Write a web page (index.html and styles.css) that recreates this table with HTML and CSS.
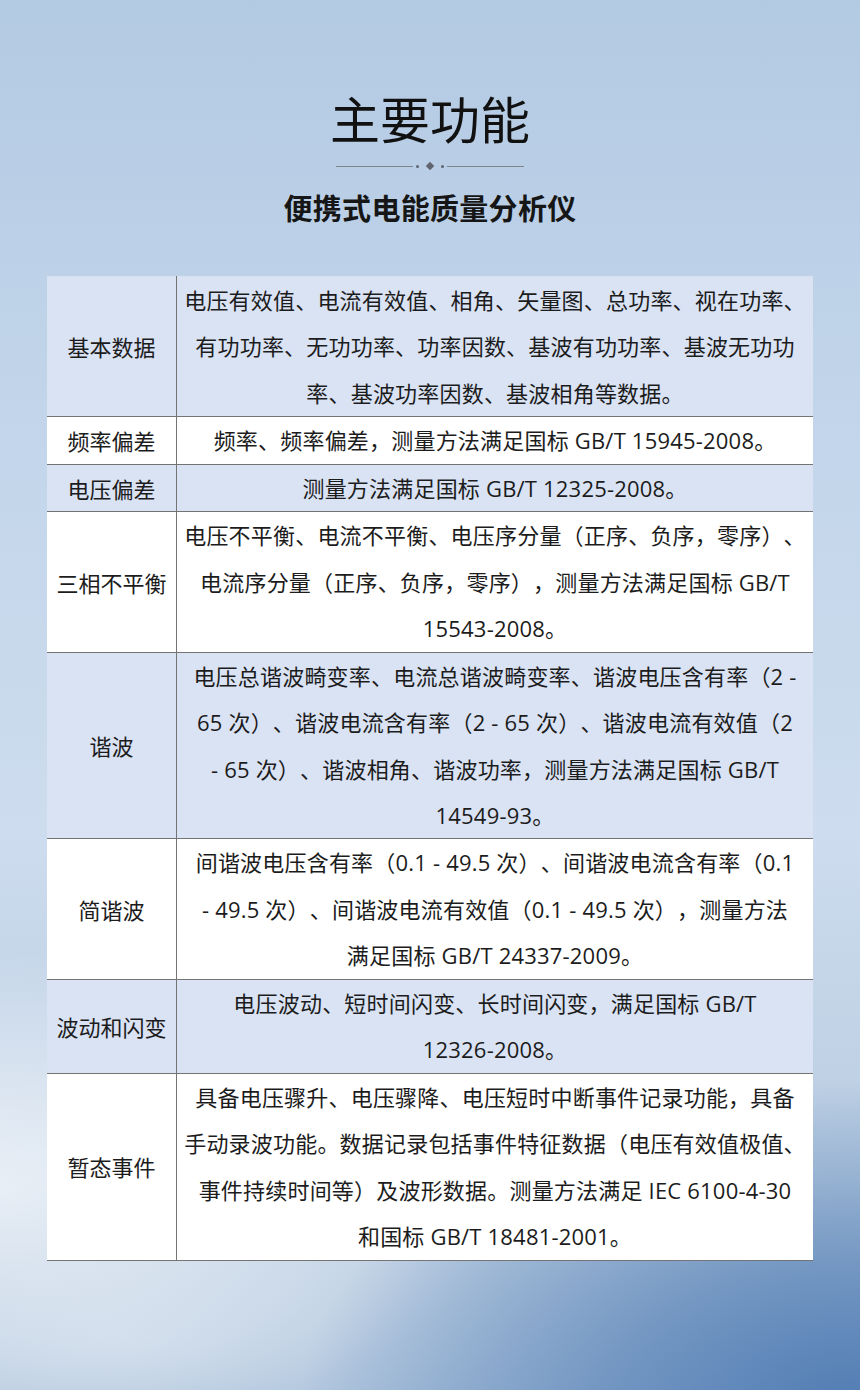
FILE: index.html
```html
<!DOCTYPE html>
<html lang="zh-CN">
<head>
<meta charset="utf-8">
<title>主要功能</title>
<link rel="stylesheet" href="styles.css">
</head>
<body>
<div class="page">
  <header class="head">
    <h1 class="title">主要功能</h1>
    <div class="divider">
      <span class="line"></span>
      <span class="dot"></span>
      <span class="diamond"></span>
      <span class="dot"></span>
      <span class="line"></span>
    </div>
    <h2 class="subtitle">便携式电能质量分析仪</h2>
  </header>
  <table class="spec">
    <tr class="blue">
      <th>基本数据</th>
      <td>电压有效值、电流有效值、相角、矢量图、总功率、视在功率、<br>有功功率、无功功率、功率因数、基波有功功率、基波无功功<br>率、基波功率因数、基波相角等数据。</td>
    </tr>
    <tr class="white">
      <th>频率偏差</th>
      <td>频率、频率偏差，测量方法满足国标 GB/T 15945-2008。</td>
    </tr>
    <tr class="blue">
      <th>电压偏差</th>
      <td>测量方法满足国标 GB/T 12325-2008。</td>
    </tr>
    <tr class="white">
      <th>三相不平衡</th>
      <td>电压不平衡、电流不平衡、电压序分量（正序、负序，零序）、<br>电流序分量（正序、负序，零序），测量方法满足国标 GB/T<br>15543-2008。</td>
    </tr>
    <tr class="blue">
      <th>谐波</th>
      <td>电压总谐波畸变率、电流总谐波畸变率、谐波电压含有率（2 -<br>65 次）、谐波电流含有率（2 - 65 次）、谐波电流有效值（2<br>- 65 次）、谐波相角、谐波功率，测量方法满足国标 GB/T<br>14549-93。</td>
    </tr>
    <tr class="white">
      <th>简谐波</th>
      <td>间谐波电压含有率（0.1 - 49.5 次）、间谐波电流含有率（0.1<br>- 49.5 次）、间谐波电流有效值（0.1 - 49.5 次），测量方法<br>满足国标 GB/T 24337-2009。</td>
    </tr>
    <tr class="blue">
      <th>波动和闪变</th>
      <td>电压波动、短时间闪变、长时间闪变，满足国标 GB/T<br>12326-2008。</td>
    </tr>
    <tr class="white">
      <th>暂态事件</th>
      <td>具备电压骤升、电压骤降、电压短时中断事件记录功能，具备<br>手动录波功能。数据记录包括事件特征数据（电压有效值极值、<br>事件持续时间等）及波形数据。测量方法满足 IEC 6100-4-30<br>和国标 GB/T 18481-2001。</td>
    </tr>
  </table>
</div>
</body>
</html>
```
FILE: styles.css
```css
html, body {
  margin: 0;
  padding: 0;
}
body {
  width: 860px;
  height: 1390px;
  overflow: hidden;
  font-family: "Noto Sans CJK SC", "Noto Sans", sans-serif;
  color: #1c1c1c;
  text-spacing-trim: space-all;
  background:
    radial-gradient(ellipse 560px 330px at 860px 1410px, rgba(78,122,178,0.95) 0%, rgba(95,135,185,0.7) 45%, rgba(120,155,200,0) 100%),
    radial-gradient(ellipse 700px 260px at 120px 1340px, rgba(225,233,242,0.7) 0%, rgba(215,226,238,0.35) 55%, rgba(210,222,236,0) 100%),
    radial-gradient(ellipse 520px 240px at 0px 1190px, rgba(245,248,252,0.9) 0%, rgba(240,245,250,0) 100%),
    linear-gradient(180deg, #b3cae3 0%, #c2d5ea 30%, #cddcee 60%, #b9cce1 85%, #8fadcf 100%);
}
.page {
  display: flex;
  flex-direction: column;
  align-items: center;
}
.head {
  display: flex;
  flex-direction: column;
  align-items: center;
  padding-top: 89px;
}
.title {
  margin: 0;
  font-size: 50px;
  font-weight: 400;
  line-height: 56px;
  color: #111;
}
.divider {
  display: flex;
  align-items: center;
  gap: 3px;
  margin-top: 16px;
  height: 10px;
}
.line {
  width: 77px;
  height: 1px;
  background: #7d838c;
}
.dot {
  width: 3px;
  height: 3px;
  border-radius: 50%;
  background: #5f6570;
}
.diamond {
  width: 6px;
  height: 6px;
  background: #5f6570;
  transform: rotate(45deg);
  margin: 0 5px;
}
.subtitle {
  margin: 18px 0 0;
  font-size: 29px;
  font-weight: 700;
  line-height: 36px;
  letter-spacing: 0.3px;
  color: #161616;
}
.spec {
  margin-top: 51px;
  width: 766px;
  border-collapse: collapse;
  table-layout: fixed;
  font-family: "Open Sans", "Noto Sans CJK SC", sans-serif;
  font-size: 22px;
  line-height: 46.45px;
  letter-spacing: 0.2px;
}
.spec tr {
  border-bottom: 1px solid #747474;
}
.spec tr:first-child {
  border-top: 1px solid #d8e0ee;
}
.spec th {
  width: 129px;
  font-family: "Noto Sans CJK SC", sans-serif;
  font-weight: 400;
  text-align: center;
  padding: 0;
  border-right: 1px solid #747474;
  white-space: nowrap;
  letter-spacing: 0;
}
.spec td {
  text-align: center;
  padding: 0 4px;
  white-space: nowrap;
}
.blue {
  background: #dae3f4;
}
.white {
  background: #ffffff;
}
```
